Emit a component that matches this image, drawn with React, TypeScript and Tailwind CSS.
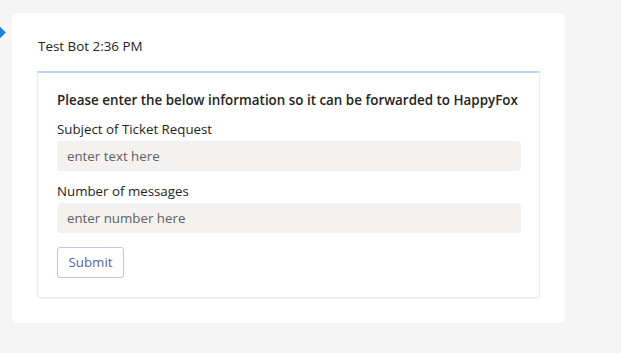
export default function App() {
  return (
    <div
      className="relative h-[353px] w-[621px] overflow-hidden bg-[#f5f5f5] pt-[13px] pl-[12px]"
      style={{ fontFamily: "'Open Sans', 'Noto Sans', sans-serif" }}
    >
      <div className="absolute left-[-5px] top-[28px] h-[9px] w-[9px] rotate-45 bg-[#1f7fdc]" />
      <div className="flex h-[310px] w-[553px] flex-col rounded-[6px] bg-white pl-[25px] pt-[25px]">
        <div className="h-[33px] pl-[1px] text-[13.4px] leading-[16px] text-[#252423]">
          Test Bot 2:36 PM
        </div>
        <div className="h-[227px] w-[503px] rounded-b-[3px] border border-t-[2px] border-[#ececec] border-t-[#bcd6f1] px-[19px] pt-[18px] shadow-[0_1px_2px_rgba(0,0,0,0.06)]">
          <div className="whitespace-nowrap text-[13.4px] font-semibold leading-[18px] text-[#252423]">
            Please enter the below information so it can be forwarded to HappyFox
          </div>
          <div className="mt-[11px] text-[13.3px] leading-[18px] text-[#252423]">
            Subject of Ticket Request
          </div>
          <input
            className="mt-[3px] block h-[30px] w-[464px] rounded-[4px] bg-[#f3f2f1] px-[10px] text-[13.3px] text-[#252423] outline-none placeholder:text-[#616161]"
            placeholder="enter text here"
          />
          <div className="mt-[11px] text-[13.3px] leading-[18px] text-[#252423]">
            Number of messages
          </div>
          <input
            className="mt-[3px] block h-[30px] w-[464px] rounded-[4px] bg-[#f3f2f1] px-[10px] text-[13.3px] text-[#252423] outline-none placeholder:text-[#616161]"
            placeholder="enter number here"
          />
          <button className="mt-[14px] flex h-[31px] w-[67px] items-center justify-center rounded-[3px] border border-[#c4c3ea] bg-white text-[13.3px] text-[#5b5fa8]">
            Submit
          </button>
        </div>
      </div>
    </div>
  );
}
